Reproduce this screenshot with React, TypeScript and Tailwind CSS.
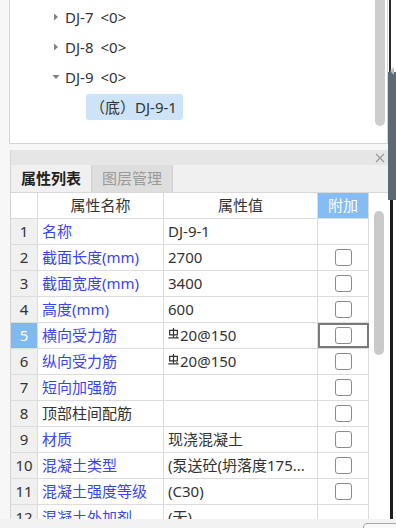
import React from 'react';

type Row = {
  n: string;
  name: string;
  value: string;
  blue: boolean;
  rebar?: boolean;
  check: boolean;
};

const rows: Row[] = [
  { n: '1', name: '名称', value: 'DJ-9-1', blue: true, check: false },
  { n: '2', name: '截面长度(mm)', value: '2700', blue: true, check: true },
  { n: '3', name: '截面宽度(mm)', value: '3400', blue: true, check: true },
  { n: '4', name: '高度(mm)', value: '600', blue: true, check: true },
  { n: '5', name: '横向受力筋', value: '20@150', blue: true, rebar: true, check: true },
  { n: '6', name: '纵向受力筋', value: '20@150', blue: true, rebar: true, check: true },
  { n: '7', name: '短向加强筋', value: '', blue: true, check: true },
  { n: '8', name: '顶部柱间配筋', value: '', blue: false, check: true },
  { n: '9', name: '材质', value: '现浇混凝土', blue: true, check: true },
  { n: '10', name: '混凝土类型', value: '(泵送砼(坍落度175...', blue: true, check: true },
  { n: '11', name: '混凝土强度等级', value: '(C30)', blue: true, check: true },
  { n: '12', name: '混凝土外加剂', value: '(无)', blue: true, check: false },
];

const treeItems = ['DJ-7', 'DJ-8', 'DJ-9'];

function Caret({ open }: { open?: boolean }) {
  return (
    <svg width="12" height="10" viewBox="0 0 12 10" className="shrink-0">
      {open ? <path d="M1.5 3h7l-3.5 4z" fill="#808080" /> : <path d="M3 1.5v7l4-3.5z" fill="#808080" />}
    </svg>
  );
}

// HRB400 rebar grade mark
function RebarMark() {
  return (
    <svg width="11" height="11" viewBox="0 0 10 10" className="shrink-0 mb-[5px] mr-[1px]" fill="none" stroke="#333" strokeWidth="1.1">
      <path d="M1.5 2.2h7v4h-7z" />
      <path d="M5 0v8.6" />
      <path d="M0.3 9h9.4" />
      <path d="M7.6 7.6l1.2 1.2" />
    </svg>
  );
}

function Checkbox() {
  return <div className="w-[17px] h-[17px] rounded-[3px] border-[1.5px] border-[#8c8c8c] bg-white" />;
}

export default function App() {
  return (
    <div className="w-[396px] h-[528px] overflow-hidden bg-[#f7f7f7] flex flex-col font-['Noto_Sans','Noto_Sans_CJK_SC',sans-serif] text-[15px] text-[#333]">
      <div className="flex flex-1 min-h-0">
        <div className="flex-1 min-w-0 flex flex-col pl-[9px]">
          {/* component tree */}
          <div className="h-[144px] shrink-0 flex bg-white border-x border-b border-[#d4d4d4]">
            <div className="flex-1 pt-[2px]">
              {treeItems.map((t, i) => (
                <div key={t} className="h-[30px] flex items-center pl-[41px]">
                  <Caret open={i === 2} />
                  <span className="ml-[2px]">{t}</span>
                  <span className="ml-[7px]">&lt;0&gt;</span>
                </div>
              ))}
              <div className="h-[30px] flex items-center pl-[76px]">
                <div className="h-[26px] flex items-center pl-[4px] pr-[6px] rounded-[3px] bg-[#cde4f8]">（底）DJ-9-1</div>
              </div>
            </div>
            <div className="w-[14px] flex justify-center">
              <div className="w-[10px] h-[126px] rounded-b-full bg-[#cdcdcd]" />
            </div>
          </div>
          <div className="h-[6px] shrink-0" />
          {/* property panel */}
          <div className="flex-1 min-h-0 ml-[1px] flex flex-col bg-white border-l border-[#d4d4d4]">
            <div className="h-[15px] shrink-0 bg-[#e6e6e6] flex items-center justify-end pr-[3px]">
              <svg width="10" height="10" viewBox="0 0 10 10" stroke="#9a9a9a" strokeWidth="1.2">
                <path d="M1 1l8 8M9 1l-8 8" />
              </svg>
            </div>
            <div className="h-[28px] shrink-0 flex bg-[#f0f0f0] border-b border-[#d8d8d8]">
              <div className="w-[81px] flex items-center justify-center font-bold text-[#222] border-r border-[#cfcfcf]">属性列表</div>
              <div className="w-[81px] flex items-center justify-center text-[#9a9a9a] bg-[#dedede] border-r border-[#cfcfcf]">图层管理</div>
            </div>
            <div className="flex-1 min-h-0 flex overflow-hidden">
              <div className="w-[358px] shrink-0">
                <div className="h-[26px] flex border-b border-[#dcdcdc]">
                  <div className="w-[27px] border-r border-[#dcdcdc]" />
                  <div className="w-[126px] border-r border-[#dcdcdc] flex items-center justify-center">属性名称</div>
                  <div className="w-[154px] border-r border-[#dcdcdc] flex items-center justify-center">属性值</div>
                  <div className="w-[51px] border-r border-[#dcdcdc] bg-[#85bcf4] text-white flex items-center justify-center">附加</div>
                </div>
                {rows.map((r) => (
                  <div key={r.n} className="h-[26px] flex border-b border-[#dcdcdc]">
                    <div
                      className={`w-[27px] border-r border-[#dcdcdc] flex items-center justify-center ${
                        r.n === '5' ? 'bg-[#80b9f2] text-white' : 'bg-[#f0f0f0]'
                      }`}
                    >
                      {r.n}
                    </div>
                    <div className={`w-[126px] border-r border-[#dcdcdc] flex items-center pl-[4px] whitespace-nowrap overflow-hidden ${r.blue ? 'text-[#3a44f2]' : 'text-[#333]'}`}>
                      {r.name}
                    </div>
                    <div className="w-[154px] border-r border-[#dcdcdc] flex items-center pl-[4px] whitespace-nowrap overflow-hidden">
                      {r.rebar && <RebarMark />}
                      {r.value}
                    </div>
                    <div
                      className={`w-[51px] border-r border-[#dcdcdc] flex items-center justify-center ${
                        r.n === '5' ? 'outline-2 -outline-offset-2 outline-[#7a7a7a]' : ''
                      }`}
                    >
                      {r.check && <Checkbox />}
                    </div>
                  </div>
                ))}
              </div>
              <div className="flex-1 pl-[5px] pt-[18px]">
                <div className="w-[10px] h-[144px] rounded-full bg-[#cacaca]" />
              </div>
            </div>
          </div>
        </div>
        {/* right edge splitter */}
        <div className="w-[8px] shrink-0 flex flex-col">
          <div className="h-[72px] flex bg-white">
            <div className="w-[2px] bg-[#2b2b2b] ml-[1px]" />
          </div>
          <div className="h-[128px] bg-[#5d6975] flex items-center pl-[2px]">
            <svg width="4" height="8" viewBox="0 0 4 8" className="mt-[-130px]">
              <path d="M4 0v8L0 4z" fill="#b8bfc6" />
            </svg>
          </div>
          <div className="flex-1 flex bg-white">
            <div className="w-[3px] bg-[#1f1f1f] ml-[2px]" />
          </div>
        </div>
      </div>
      <div className="h-[9px] shrink-0 bg-[#f2f2f2] flex justify-end overflow-hidden">
        <div className="mt-[4px] w-[36px] h-[20px] rounded-[4px] border border-[#a8a8a8] bg-[#f8f8f8] -mr-[3px]" />
      </div>
    </div>
  );
}
